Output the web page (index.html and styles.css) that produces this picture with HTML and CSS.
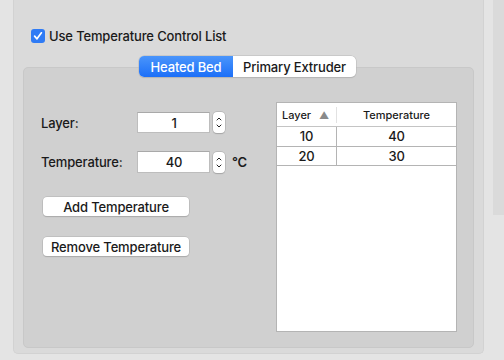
FILE: index.html
```html
<!DOCTYPE html>
<html lang="en">
<head>
	<meta charset="UTF-8">
	<title>Temperature Control</title>
	<link rel="stylesheet" href="styles.css">
</head>
<body>
	<div class="gutter"></div>
	<div class="outerBox">
		<label class="useList">
			<span class="check">
				<svg width="10" height="10" viewBox="0 0 10 10"><path d="M1.6 5.2 L4 7.8 L8.4 1.8" fill="none" stroke="#fff" stroke-width="1.7" stroke-linecap="round" stroke-linejoin="round"/></svg>
			</span>
			<span>Use Temperature Control List</span>
		</label>
		<div class="tabs">
			<span class="tab selected">Heated Bed</span>
			<span class="tab">Primary Extruder</span>
		</div>
		<div class="innerBox">
			<div class="fields">
				<div class="row">
					<span class="label">Layer:</span>
					<span class="input">1</span>
					<span class="stepper">
						<svg width="12" height="21" viewBox="0 0 12 21"><path d="M4 8 L6 6 L8 8 M4 13 L6 15 L8 13" fill="none" stroke="#222" stroke-width="1" stroke-linecap="round" stroke-linejoin="round"/></svg>
					</span>
				</div>
				<div class="row second">
					<span class="label">Temperature:</span>
					<span class="input">40</span>
					<span class="stepper">
						<svg width="12" height="21" viewBox="0 0 12 21"><path d="M4 8 L6 6 L8 8 M4 13 L6 15 L8 13" fill="none" stroke="#222" stroke-width="1" stroke-linecap="round" stroke-linejoin="round"/></svg>
					</span>
					<span class="unit">°C</span>
				</div>
				<button class="btn add">Add Temperature</button>
				<button class="btn remove">Remove Temperature</button>
			</div>
			<div class="table">
				<div class="thead">
					<span class="col1">Layer <span class="sort">▲</span></span>
					<span class="col2">Temperature</span>
				</div>
				<div class="tr">
					<span class="col1">10</span>
					<span class="col2">40</span>
				</div>
				<div class="tr">
					<span class="col1">20</span>
					<span class="col2">30</span>
				</div>
			</div>
		</div>
	</div>
	<div class="side">
		<div class="sideBar"></div>
	</div>
</body>
</html>
```

FILE: styles.css
```css
html, body {
	width: 100%;
	height: 100%;
	margin: 0;
	padding: 0;
}
body {
	background: #e4e4e4;
	display: flex;
	align-items: flex-start;
	font-family: Inter, "Liberation Sans", Arial, sans-serif;
	font-size: 13px;
	font-weight: 500;
	letter-spacing: -0.15px;
	color: #1a1a1a;
	overflow: hidden;
}
.gutter {
	width: 13px;
	flex: none;
}
.outerBox {
	width: 471px;
	height: 354px;
	flex: none;
	background: #dadada;
	border: 1px solid #d2d2d2;
	border-top: none;
	border-radius: 0 0 5px 5px;
	padding: 29px 9px 0 9px;
	box-sizing: border-box;
	display: flex;
	flex-direction: column;
}
.useList {
	display: flex;
	align-items: center;
	gap: 4px;
	margin-left: 8px;
	height: 14px;
}
.check {
	width: 14px;
	height: 14px;
	border-radius: 3px;
	background: #2f7bf5;
	display: flex;
	align-items: center;
	justify-content: center;
}
.tabs {
	align-self: center;
	display: flex;
	margin-top: 13px;
	margin-bottom: -10px;
	margin-left: -2px;
	position: relative;
	z-index: 1;
	height: 21px;
	box-sizing: border-box;
	border-radius: 5px;
	background: #fff;
	box-shadow: 0 0 0 0.5px #b8b8b8, 0 1px 1px rgba(0,0,0,0.15);
	overflow: hidden;
}
.tab {
	display: flex;
	align-items: center;
	justify-content: center;
	box-sizing: border-box;
}
.tab.selected {
	background: linear-gradient(#4a95fb, #1c6ff8);
	color: #fff;
	width: 94px;
}
.tab:last-child {
	width: 123px;
}
.innerBox {
	height: 281px;
	background: #d0d0d0;
	border: 1px solid #c8c8c8;
	border-radius: 5px;
	box-sizing: border-box;
	padding: 34px 16px 0 17px;
	display: flex;
}
.fields {
	flex: 1;
	margin-top: 10px;
	display: flex;
	flex-direction: column;
	align-items: flex-start;
}
.row {
	display: flex;
	align-items: center;
	height: 21px;
}
.row.second {
	margin-top: 18px;
	height: 22px;
}
.label {
	width: 96px;
}
.input {
	width: 73px;
	height: 100%;
	box-sizing: border-box;
	background: #fff;
	border: 1px solid #bdbdbd;
	border-top-color: #a9a9a9;
	display: flex;
	align-items: center;
	justify-content: center;
	padding-left: 1px;
}
.stepper {
	width: 12px;
	height: 21px;
	margin-left: 3px;
	box-sizing: border-box;
	background: #fff;
	border-radius: 4px;
	box-shadow: 0 0 0 0.5px #a8a8a8, 0 0.5px 1px rgba(0,0,0,0.2);
	display: flex;
}
.unit {
	margin-left: 7px;
	font-weight: 600;
}
.btn {
	font-family: inherit;
	font-size: 13px;
	font-weight: 500;
	letter-spacing: inherit;
	color: #1a1a1a;
	background: #fff;
	border: none;
	border-radius: 4px;
	box-shadow: 0 0 0 0.5px #b0b0b0, 0 1px 1px rgba(0,0,0,0.2);
	width: 146px;
	height: 19px;
	padding: 0;
	margin-left: 2px;
}
.btn.add {
	margin-top: 24px;
}
.btn.remove {
	margin-top: 21px;
}
.table {
	width: 181px;
	height: 230px;
	flex: none;
	background: #fff;
	border: 1px solid #b4b4b4;
	box-sizing: border-box;
}
.thead, .tr {
	display: flex;
	text-align: center;
}
.thead {
	height: 23px;
	font-size: 11px;
	letter-spacing: 0;
	align-items: center;
	border-bottom: 1px solid #c4c4c4;
}
.thead .col1 {
	border-right: 1px solid #e2e2e2;
	height: 16px;
	line-height: 16px;
	text-align: left;
	padding-left: 5px;
}
.sort {
	color: #8a8a8a;
	font-size: 10px;
	margin-left: 5px;
}
.col1 {
	width: 60px;
	flex: none;
	box-sizing: border-box;
}
.col2 {
	flex: 1;
}
.tr {
	height: 20px;
	line-height: 19px;
	box-sizing: border-box;
	border-bottom: 1px solid #b4b4b4;
	font-size: 13px;
}
.tr .col1 {
	border-right: 1px solid #b4b4b4;
}
.tr:last-child {
	height: 19px;
}
.side {
	flex: 1;
	height: 100%;
	display: flex;
	justify-content: flex-end;
}
.sideBar {
	width: 11px;
	height: 215px;
	background: #dadada;
}
```
